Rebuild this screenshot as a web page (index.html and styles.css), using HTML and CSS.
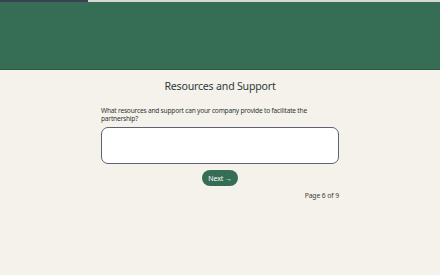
FILE: index.html
```html
<!DOCTYPE html>
<html lang="en">
<head>
  <meta charset="UTF-8">
  <meta name="viewport" content="width=device-width, initial-scale=1">
  <title>Resources and Support</title>
  <link rel="stylesheet" href="styles.css">
</head>
<body>
  <div class="progress"><div class="progress-fill"></div></div>
  <header class="banner"></header>

  <main class="container">
    <h1>Resources and Support</h1>
    <label for="answer" class="question">What resources and support can your company provide to facilitate the partnership?</label>
    <textarea id="answer" class="answer"></textarea>
    <div class="actions">
      <button class="next">Next &rarr;</button>
    </div>
    <div class="page-count">Page 6 of 9</div>
  </main>
</body>
</html>
```

FILE: styles.css
```css
body {
  margin: 0;
  background: #f5f2eb;
  font-family: "Noto Sans", "Open Sans", sans-serif;
  color: #2f3a3a;
}

.progress {
  height: 2px;
  background: #d8d8d8;
}

.progress-fill {
  width: 88px;
  height: 100%;
  background: #3b4152;
}

.banner {
  height: 67px;
  background: #356d55;
  border-bottom: 1px solid #2a5c45;
}

.container {
  width: 238px;
  margin: 0 auto;
  display: flex;
  flex-direction: column;
}

h1 {
  margin: 9px 0 0;
  font-size: 10.6px;
  font-weight: 400;
  letter-spacing: -0.2px;
  text-align: center;
  color: #2d3a3a;
}

.question {
  margin-top: 14px;
  font-size: 6.6px;
  line-height: 8px;
  font-weight: 400;
  letter-spacing: -0.2px;
  color: #2f3535;
}

.answer {
  margin-top: 4px;
  height: 37px;
  box-sizing: border-box;
  border: 1.5px solid #5d6470;
  border-radius: 7px;
  background: #fff;
  resize: none;
}

.actions {
  display: flex;
  justify-content: center;
  margin-top: 6px;
}

.next {
  height: 16px;
  padding: 0 6px;
  border: none;
  border-radius: 8px;
  background: #356d55;
  color: #fff;
  font-family: inherit;
  font-size: 7px;
  letter-spacing: -0.1px;
}

.page-count {
  margin-top: 5px;
  text-align: right;
  font-size: 6.8px;
  letter-spacing: -0.1px;
  color: #3b4040;
}
```
